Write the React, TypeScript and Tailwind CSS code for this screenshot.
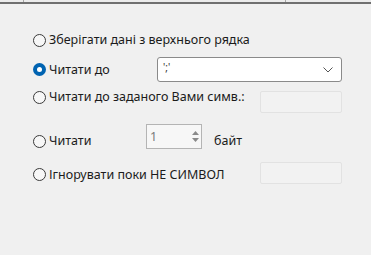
import React from "react";

function Radio({ checked = false }: { checked?: boolean }) {
  if (checked) {
    return (
      <span className="grid h-[13px] w-[13px] shrink-0 place-items-center rounded-full bg-[#0063b1]">
        <span className="h-[5px] w-[5px] rounded-full bg-white" />
      </span>
    );
  }
  return <span className="h-[13px] w-[13px] shrink-0 rounded-full border border-[#3a3a3a] bg-[#f7f7f7]" />;
}

function Option({ checked, label }: { checked?: boolean; label: string }) {
  return (
    <label className="flex h-[18px] items-center gap-[3px]">
      <Radio checked={checked} />
      <span>{label}</span>
    </label>
  );
}

function DisabledBox() {
  return <div className="h-[22px] w-[82px] rounded-[2px] border border-[#e2e2e2] bg-[#f2f2f2]" />;
}

export default function App() {
  return (
    <div
      className="h-[255px] w-[371px] overflow-hidden bg-[#f0f0f0] text-[12.5px] leading-[18px] text-[#1b1b1b]"
      style={{ fontFamily: '"Noto Sans", "Open Sans", sans-serif' }}
    >
      {/* header strip of the grid above */}
      <div className="flex h-[2px] bg-[#ececec]">
        <div className="ml-[23px] w-px bg-[#a6a6a6]" />
        <div className="ml-[261px] w-px bg-[#a6a6a6]" />
      </div>
      <div className="h-[2px] bg-[#707070]" />

      <div className="flex flex-col pl-[33px] pr-[29px]">
        <div className="mt-[26px] flex h-[20px] items-center">
          <Option label="Зберігати дані з верхнього рядка" />
        </div>

        <div className="mt-[7px] flex h-[25px] items-center">
          <div className="w-[124px]">
            <Option checked label="Читати до" />
          </div>
          <div className="flex h-[25px] flex-1 items-start justify-between rounded-[3px] border border-[#8a8a8a] bg-white pl-[5px] pr-[8px]">
            <span className="mt-[2px] text-[10px] leading-[14px] text-[#333]">';'</span>
            <svg width="10" height="6" viewBox="0 0 10 6" className="mt-[9px]">
              <path d="M0.5 0.5 L5 5 L9.5 0.5" fill="none" stroke="#555" strokeWidth="1" />
            </svg>
          </div>
        </div>

        <div className="mt-[5px] flex h-[26px] items-start justify-between">
          <div className="mt-[1px]">
            <Option label="Читати до заданого Вами симв.:" />
          </div>
          <div className="mt-[4px]">
            <DisabledBox />
          </div>
        </div>

        <div className="mt-[11px] flex h-[26px] items-start">
          <div className="mt-[8px] w-[113px]">
            <Option label="Читати" />
          </div>
          <div className="flex h-[25px] w-[56px] items-center justify-between border border-[#b4b4b4] bg-[#f7f7f7] pl-[3px] pr-[2px]">
            <span className="text-[#7a7a7a]">1</span>
            <div className="flex flex-col items-center gap-[3px]">
              <svg width="7" height="4" viewBox="0 0 7 4">
                <path d="M0 4 L3.5 0 L7 4 Z" fill="#8a8a8a" />
              </svg>
              <svg width="7" height="4" viewBox="0 0 7 4">
                <path d="M0 0 L3.5 4 L7 0 Z" fill="#8a8a8a" />
              </svg>
            </div>
          </div>
          <span className="ml-[12px] mt-[8px]">байт</span>
        </div>

        <div className="mt-[12px] flex h-[22px] items-center justify-between">
          <div className="mt-[3px]">
            <Option label="Ігнорувати поки НЕ СИМВОЛ" />
          </div>
          <DisabledBox />
        </div>
      </div>
    </div>
  );
}
